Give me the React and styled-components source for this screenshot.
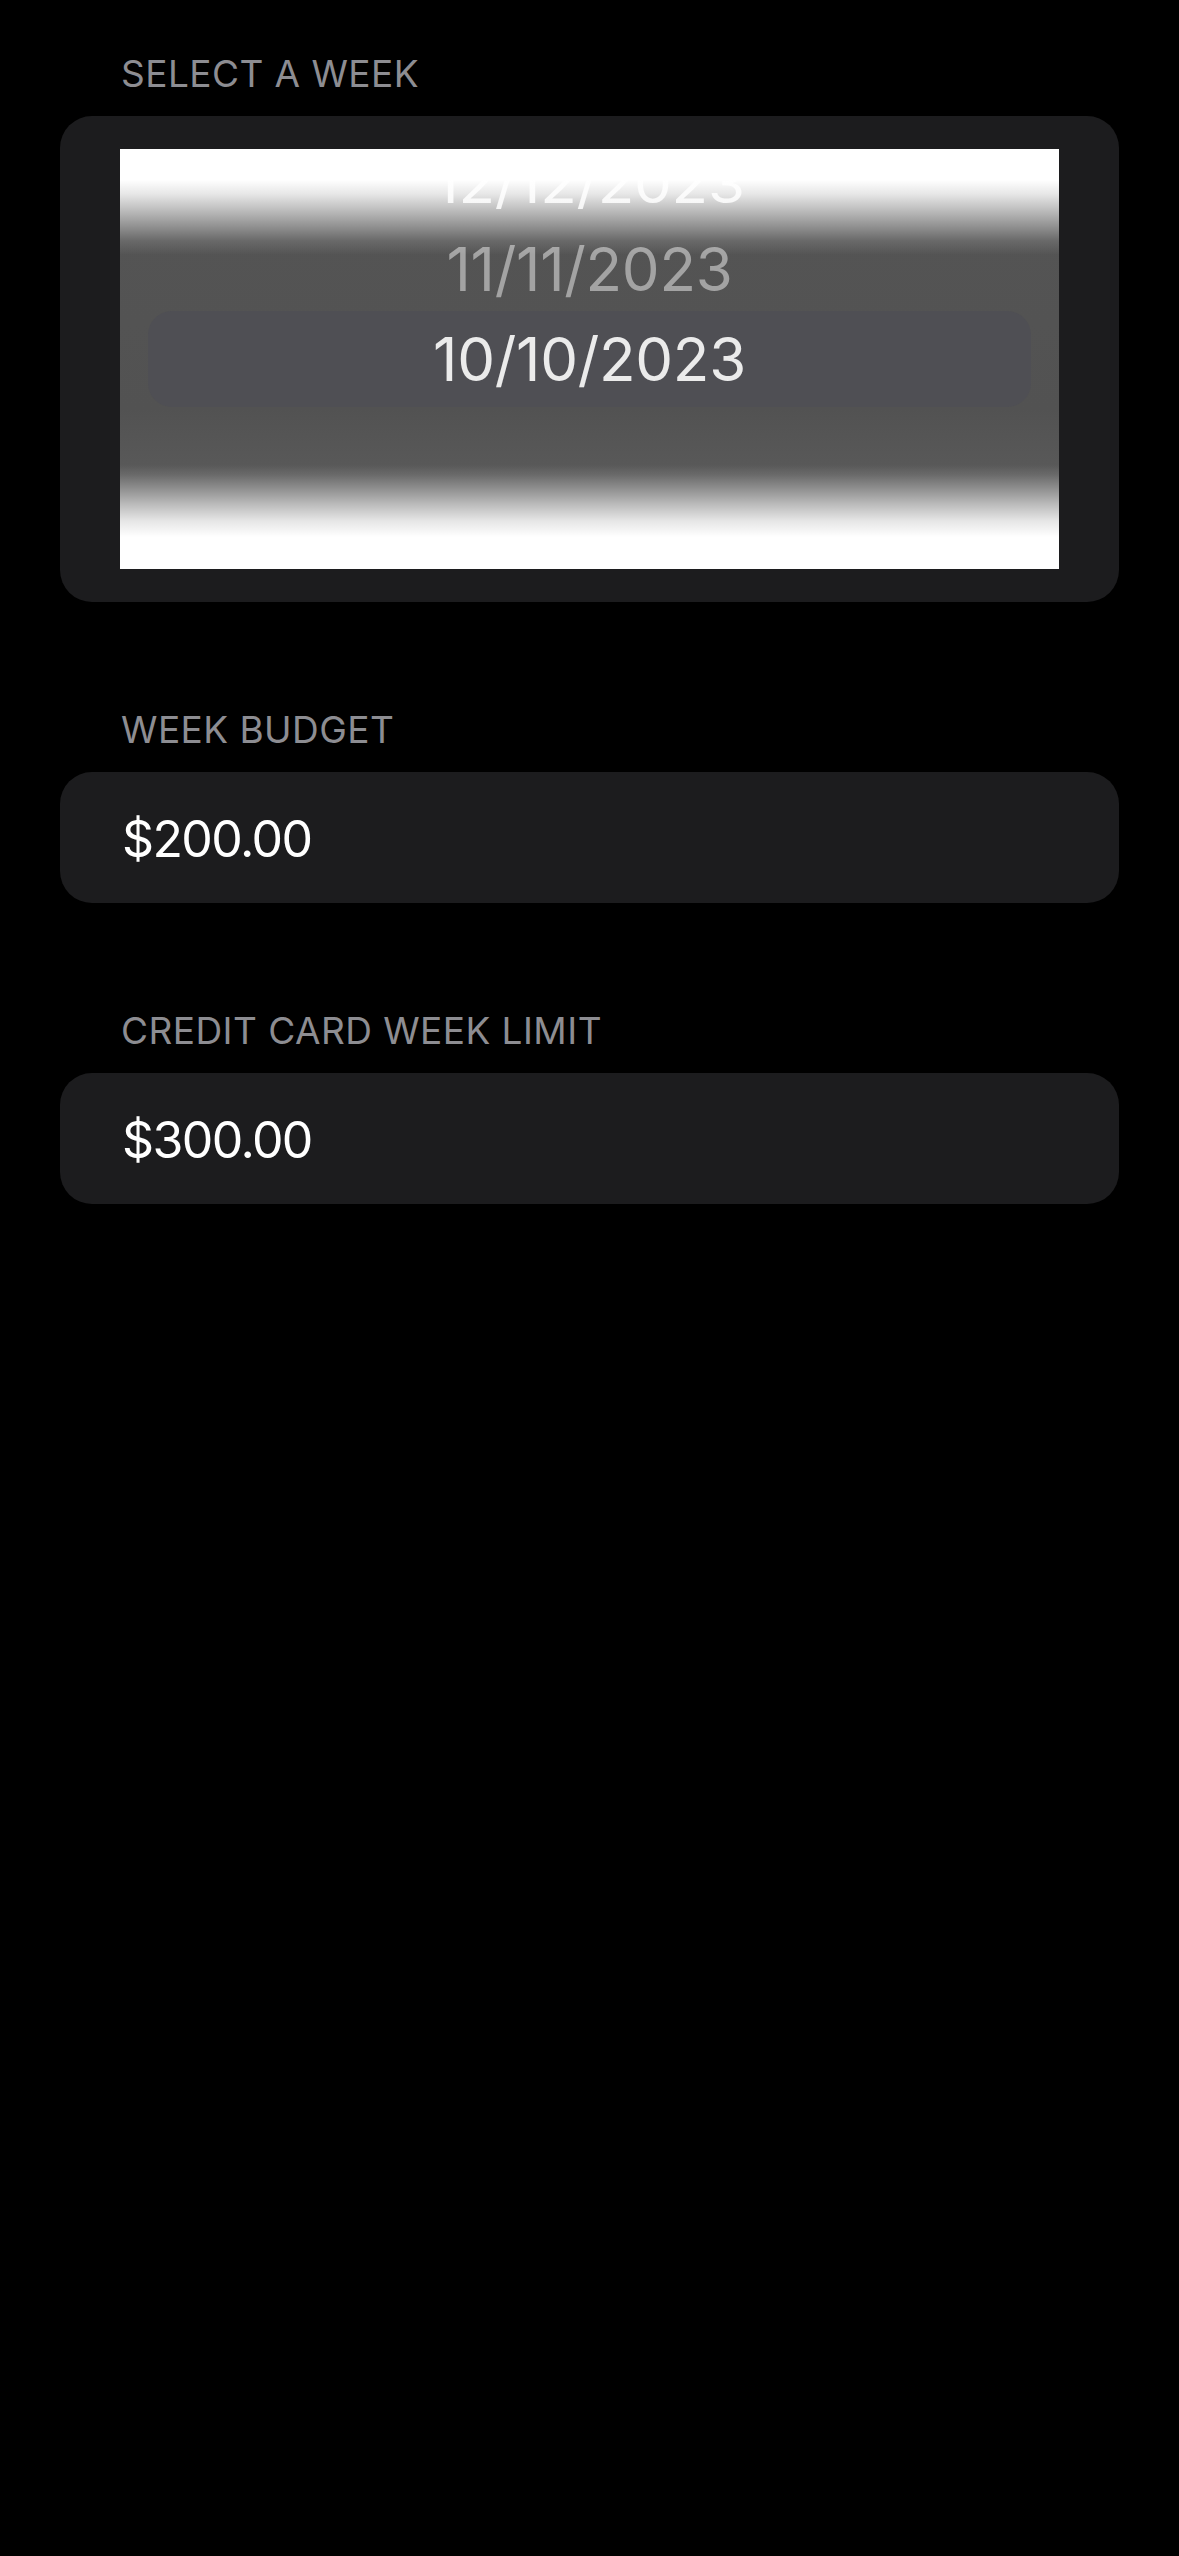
import React from 'react';
import styled, { createGlobalStyle } from 'styled-components';

const GlobalStyle = createGlobalStyle`
  html, body {
    margin: 0;
    padding: 0;
    background: #000;
    min-height: 100%;
  }

  body {
    font-family: Inter, "Noto Sans", "Liberation Sans", sans-serif;
    -webkit-font-smoothing: antialiased;
  }
`;

const weeks = [
  { label: '12/12/2023', height: 88, color: '#e4e4e4', squash: 0.9 },
  { label: '11/11/2023', height: 84, color: '#a3a3a3', squash: 1 },
  { label: '10/10/2023', height: 96, color: '#ebebeb', squash: 1, selected: true },
];

const Page = () => {
  return (
    <Screen>
      <GlobalStyle />
      <Section>
        <Label>Select a week</Label>
        <PickerCard>
          <Wheel>
            {weeks.map((w) => (
              <WheelRow key={w.label} $height={w.height} $color={w.color} $selected={w.selected}>
                <RowText $squash={w.squash}>{w.label}</RowText>
              </WheelRow>
            ))}
          </Wheel>
        </PickerCard>
      </Section>

      <Section>
        <Label>Week budget</Label>
        <Field>
          <Value>$200.00</Value>
        </Field>
      </Section>

      <Section>
        <Label>Credit card week limit</Label>
        <Field>
          <Value>$300.00</Value>
        </Field>
      </Section>
    </Screen>
  );
};

const Screen = styled.div`
  min-height: 2556px;
  box-sizing: border-box;
  padding: 52px 60px 0 60px;
  background: #000;
  display: flex;
  flex-direction: column;
  gap: 106px;
`;

const Section = styled.section`
  display: flex;
  flex-direction: column;
  gap: 20px;
`;

const Label = styled.div`
  padding-left: 61px;
  font-size: 37px;
  line-height: 44px;
  color: #8d8d92;
  text-transform: uppercase;
  letter-spacing: 0.45px;
`;

const PickerCard = styled.div`
  background: #1c1c1e;
  border-radius: 32px;
  padding: 33px 60px;
`;

const Wheel = styled.div`
  position: relative;
  height: 420px;
  box-sizing: border-box;
  padding-bottom: 162px;
  overflow: hidden;
  display: flex;
  flex-direction: column;
  justify-content: flex-end;
  background: linear-gradient(to bottom, #555555 0px, #525252 260px, #5a5a5a 330px, #5a5a5a 420px);

  &::before,
  &::after {
    content: '';
    position: absolute;
    left: 0;
    right: 0;
    pointer-events: none;
    z-index: 1;
  }

  &::before {
    top: 0;
    height: 106px;
    background: linear-gradient(
      to bottom,
      rgba(255, 255, 255, 1) 0px,
      rgba(255, 255, 255, 1) 31px,
      rgba(255, 255, 255, 0.86) 45px,
      rgba(255, 255, 255, 0.6) 62px,
      rgba(255, 255, 255, 0.35) 78px,
      rgba(255, 255, 255, 0.12) 92px,
      rgba(255, 255, 255, 0) 106px
    );
  }

  &::after {
    bottom: 0;
    height: 104px;
    background: linear-gradient(
      to top,
      rgba(255, 255, 255, 1) 0px,
      rgba(255, 255, 255, 1) 32px,
      rgba(255, 255, 255, 0.85) 48px,
      rgba(255, 255, 255, 0.6) 64px,
      rgba(255, 255, 255, 0.33) 80px,
      rgba(255, 255, 255, 0.1) 94px,
      rgba(255, 255, 255, 0) 104px
    );
  }
`;

const WheelRow = styled.div`
  flex: 0 0 ${(p) => p.$height}px;
  display: flex;
  align-items: center;
  justify-content: center;
  margin: 0 28px;
  border-radius: 24px;
  background: ${(p) => (p.$selected ? '#4f4f54' : 'transparent')};
  color: ${(p) => p.$color};
  font-size: 60px;
  line-height: 72px;
  letter-spacing: -0.3px;
`;

const RowText = styled.span`
  display: inline-block;
  transform: scaleY(${(p) => p.$squash});
`;

const Field = styled.div`
  height: 131px;
  box-sizing: border-box;
  background: #1c1c1e;
  border-radius: 32px;
  padding: 3px 0 0 62px;
  display: flex;
  align-items: center;
`;

const Value = styled.div`
  font-size: 50px;
  line-height: 60px;
  color: #ffffff;
  letter-spacing: -1.6px;
`;

export default Page;
